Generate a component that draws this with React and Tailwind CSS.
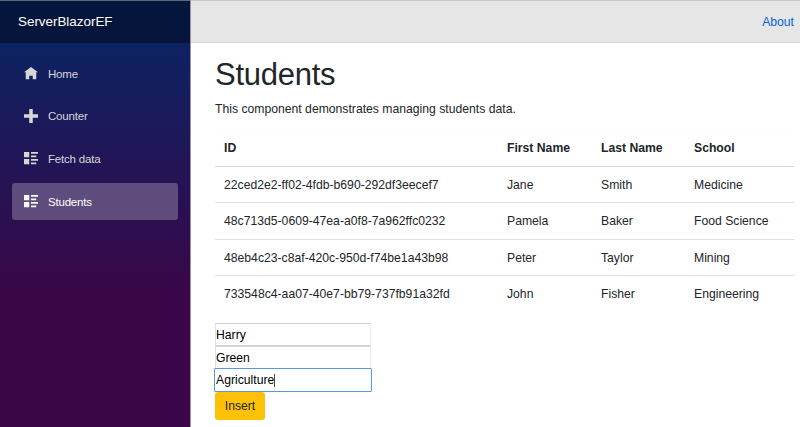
const students = [
  ['22ced2e2-ff02-4fdb-b690-292df3eecef7', 'Jane', 'Smith', 'Medicine'],
  ['48c713d5-0609-47ea-a0f8-7a962ffc0232', 'Pamela', 'Baker', 'Food Science'],
  ['48eb4c23-c8af-420c-950d-f74be1a43b98', 'Peter', 'Taylor', 'Mining'],
  ['733548c4-aa07-40e7-bb79-737fb91a32fd', 'John', 'Fisher', 'Engineering'],
];

const iconPaths = {
  home: 'M4 0l-4 3h1v4h2v-2h2v2h2v-4.03l1 .03-4-3z',
  plus: 'M3 0v3h-3v2h3v3h2v-3h3v-2h-3v-3h-2z',
  list: 'M0 0v3h3v-3h-3zM4 0v1h4v-1h-4zM4 2v1h3v-1h-3zM0 4v3h3v-3h-3zM4 4v1h4v-1h-4zM4 6v1h3v-1h-3z',
};

function NavItem({ icon, label, active }) {
  return (
    <a
      className={
        'flex h-[37px] items-center rounded-[3px] pl-3 text-[11.5px] tracking-[-0.2px] ' +
        (active ? 'bg-white/25 text-white' : 'text-[#d7d7d7]')
      }
    >
      <svg viewBox="0 0 8 8" className="mr-[10px] h-[14px] w-[14px] shrink-0" fill="currentColor">
        <path d={iconPaths[icon]} />
      </svg>
      <span>{label}</span>
    </a>
  );
}

export default function App() {
  return (
    <div className="flex h-[427px] w-[800px] overflow-hidden bg-white font-['Liberation_Sans',Arial,sans-serif] text-[12.2px] leading-[18px] text-[#212529]">
      <aside className="flex w-[191px] shrink-0 flex-col border-r border-[#a08fa9] bg-[linear-gradient(180deg,rgb(5,39,103)_0%,#3a0647_70%)] bg-clip-padding">
        <div className="flex h-[43px] items-center border-t border-[#5d6a7e] bg-black/40 pl-[18px] text-[13.4px] text-white">
          ServerBlazorEF
        </div>
        <nav className="flex flex-col gap-[5.7px] px-3 pt-[12px]">
          <NavItem icon="home" label="Home" />
          <NavItem icon="plus" label="Counter" />
          <NavItem icon="list" label="Fetch data" />
          <NavItem icon="list" label="Students" active />
        </nav>
      </aside>
      <main className="flex-1">
        <header className="flex h-[43px] items-center justify-end border-t border-b border-t-[#c9c9c9] border-b-[#d6d5d5] bg-[#e6e6e6] pr-[6px] text-[#0366d6]">
          About
        </header>
        <div className="pt-[13px] pr-[6px] pl-6">
          <h1 className="text-[31px] leading-[37px] tracking-[-0.25px]">Students</h1>
          <p className="mt-[7px]">This component demonstrates managing students data.</p>
          <table className="mt-[12px] w-[579px] table-fixed border-separate border-spacing-0 text-left">
            <colgroup>
              <col className="w-[283px]" />
              <col className="w-[94px]" />
              <col className="w-[93px]" />
              <col className="w-[109px]" />
            </colgroup>
            <thead>
              <tr>
                {['ID', 'First Name', 'Last Name', 'School'].map((name) => (
                  <th key={name} className="h-[37px] border-t border-b border-t-[#fcfcfc] border-b-[#d3d9df] px-[9px] pt-0 pb-px font-bold">{name}</th>
                ))}
              </tr>
            </thead>
            <tbody>
              {students.map((row) => (
                <tr key={row[0]} className="group">
                  {row.map((value) => (
                    <td key={value} className="h-[36.25px] border-b border-[#dee2e6] px-[9px] pt-px pb-0 group-last:border-b-0">{value}</td>
                  ))}
                </tr>
              ))}
            </tbody>
          </table>
          <div className="mt-[11px] flex flex-col items-start text-black">
            <div className="h-[23px] w-[156px] border border-t-[#d0d0d0] border-r-[#eeeeee] border-b-[#d0d0d0] border-l-[#e2e2e2] pt-[2px]">Harry</div>
            <div className="h-[22px] w-[156px] border-t border-r border-l border-t-[#d8d8d8] border-r-[#eeeeee] border-l-[#e2e2e2] pt-[2px]">Green</div>
            <div className="-ml-px flex h-[24px] w-[158px] items-center rounded-[1px] border border-[#5a95e8] pl-px">
              Agriculture<span className="h-[13px] w-px bg-black/70" />
            </div>
            <button className="h-[28px] w-[50px] rounded-[3px] bg-[#ffc107] text-[#212529]">Insert</button>
          </div>
        </div>
      </main>
    </div>
  );
}
